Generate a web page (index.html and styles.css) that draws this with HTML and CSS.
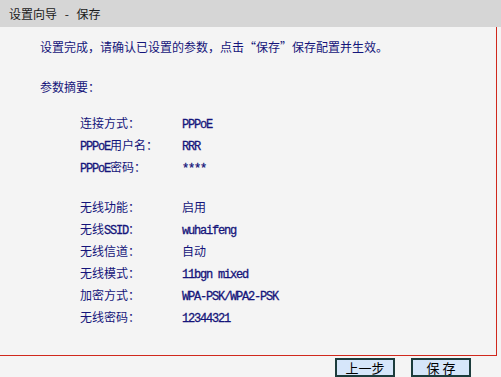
FILE: index.html
```html
<!DOCTYPE html>
<html lang="zh-CN">
<head>
<meta charset="utf-8">
<title>设置向导 - 保存</title>
<link rel="stylesheet" href="styles.css">
</head>
<body>
<div class="header">设置向导 <span class="dash">-</span> 保存</div>
<div class="main">
  <p class="intro">设置完成，请确认已设置的参数，点击“保存”保存配置并生效。</p>
  <p class="summary">参数摘要：</p>
  <div class="rows">
    <div class="label">连接方式：</div><div class="value"><span class="en">PPPoE</span></div>
    <div class="label"><span class="en">PPPoE</span>用户名：</div><div class="value"><span class="en">RRR</span></div>
    <div class="label"><span class="en">PPPoE</span>密码：</div><div class="value"><span class="en">****</span></div>
  </div>
  <div class="rows second">
    <div class="label">无线功能：</div><div class="value">启用</div>
    <div class="label">无线<span class="en">SSID</span>：</div><div class="value"><span class="en">wuhaifeng</span></div>
    <div class="label">无线信道：</div><div class="value">自动</div>
    <div class="label">无线模式：</div><div class="value"><span class="en">11bgn mixed</span></div>
    <div class="label">加密方式：</div><div class="value"><span class="en">WPA-PSK/WPA2-PSK</span></div>
    <div class="label">无线密码：</div><div class="value"><span class="en">12344321</span></div>
  </div>
</div>
<div class="footer">
  <button class="btn" type="button">上一步</button>
  <button class="btn" type="button">保 存</button>
</div>
</body>
</html>
```
FILE: styles.css
```css
html, body {
  margin: 0;
  padding: 0;
}
body {
  background: #f4f4f4;
  font-family: "Noto Sans CJK SC", "Liberation Sans", sans-serif;
  font-size: 12px;
  width: 501px;
  height: 377px;
  overflow: hidden;
}
.header {
  height: 27px;
  line-height: 27px;
  background: #d6d6d6;
  color: #1a1a1a;
  font-size: 12px;
  padding-left: 9px;
  box-sizing: border-box;
  width: 501px;
}
.header .dash {
  padding: 0 5px;
}
.main {
  width: 496px;
  height: 328px;
  box-sizing: content-box;
  border-right: 1px solid #d0281c;
  border-bottom: 1px solid #d0281c;
  color: #14147a;
  display: flex;
  flex-direction: column;
}
.intro {
  margin: 10px 0 0 40px;
  line-height: 20px;
}
.summary {
  margin: 20px 0 0 40px;
  line-height: 20px;
}
.rows {
  display: grid;
  grid-template-columns: 102px auto;
  grid-auto-rows: 22px;
  line-height: 22px;
  margin: 15px 0 0 80px;
}
.rows.second {
  margin-top: 18px;
}
.en {
  font-family: "Liberation Mono", monospace;
  font-size: 12px;
  letter-spacing: -1.2px;
  -webkit-text-stroke: 0.3px #14147a;
}
.footer {
  display: flex;
  justify-content: flex-end;
  gap: 16px;
  padding: 2px 30px 0 0;
  width: 501px;
  box-sizing: border-box;
}
.btn {
  width: 60px;
  height: 19px;
  margin: 0;
  padding: 0;
  background: #d6e6fa;
  border: 2px solid #1c3c3c;
  color: #000;
  font-family: "Noto Sans CJK SC", sans-serif;
  font-size: 13px;
  line-height: 14px;
}
```
